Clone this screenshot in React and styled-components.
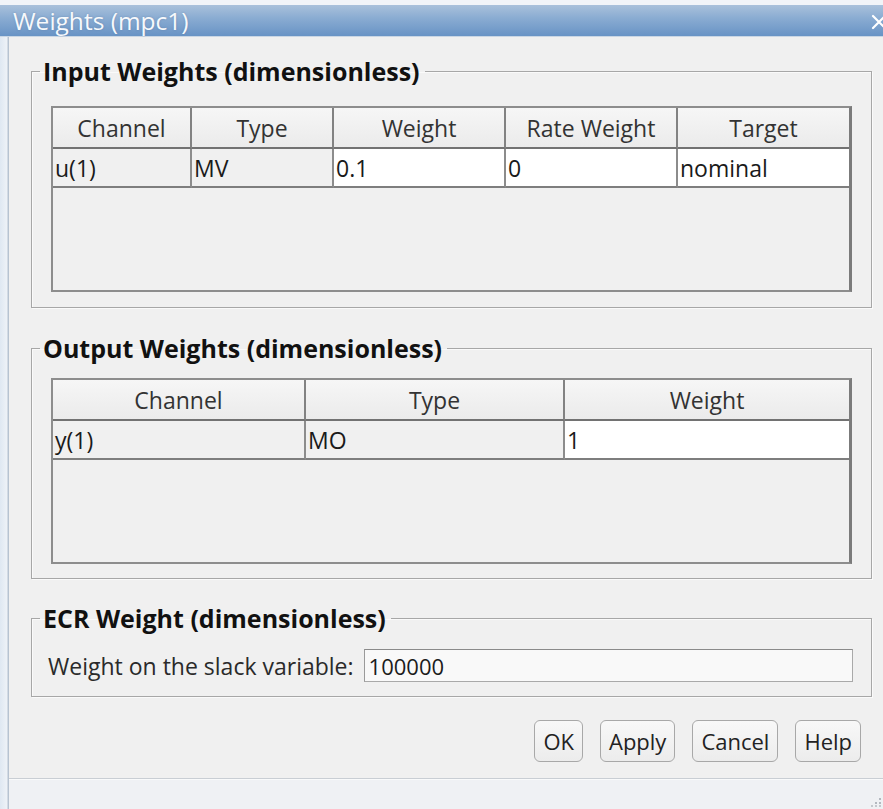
import React from "react";
import styled, { createGlobalStyle } from "styled-components";

const GlobalStyle = createGlobalStyle`
  html, body {
    margin: 0;
    padding: 0;
    background: #f0f0f0;
  }
  body {
    font-family: "Open Sans", "Noto Sans", "Liberation Sans", sans-serif;
    color: #1e1e1e;
  }
  * { box-sizing: border-box; }
`;

const Window = styled.div`
  width: 883px;
  height: 809px;
  display: flex;
  flex-direction: column;
  background: #f0f0f0;
  overflow: hidden;
`;

const TitleBar = styled.div`
  flex: none;
  height: 37px;
  padding: 5px 0 0 13px;
  display: flex;
  align-items: center;
  justify-content: space-between;
  overflow: hidden;
  background: linear-gradient(
    to bottom,
    #f1f4f8 0,
    #f1f4f8 5px,
    #a9c1db 5px,
    #8aacd2 18px,
    #6893c5 36px,
    #c9d6e4 36px
  );
`;

const Title = styled.span`
  font-size: 24.5px;
  line-height: 30px;
  color: #f7f9fc;
  text-shadow: 0 0 2px rgba(60, 90, 130, 0.35);
`;

const CloseGlyph = styled.svg`
  flex: none;
  margin-right: -4px;
  margin-top: 2px;
`;

const Frame = styled.div`
  flex: 1;
  display: flex;
  min-height: 0;
`;

const SideEdge = styled.div`
  flex: none;
  width: 9px;
  background: linear-gradient(to right, #dfe8f2, #eef2f7 7px, #b7c3d1 8px, #b7c3d1 9px);
`;

const Main = styled.div`
  flex: 1;
  display: flex;
  flex-direction: column;
  min-width: 0;
`;

const Body = styled.div`
  flex: 1;
  display: flex;
  flex-direction: column;
  padding: 21px 11px 0 22px;
`;

const GroupBox = styled.fieldset`
  margin: ${(p) => p.$top}px 0 0 0;
  padding: 0;
  min-width: 0;
  border: 1px solid #a7a7a7;
  box-shadow: inset 1px 1px 0 #fafafa, 1px 1px 0 #fafafa;
`;

const Legend = styled.legend`
  margin-left: 8px;
  padding: 0 5px 0 3px;
  font-size: 25px;
  line-height: 26px;
  font-weight: 700;
  color: #111;
`;

const GroupBody = styled.div`
  padding: ${(p) => p.$pt}px 19px ${(p) => p.$pb}px 19px;
`;

const Grid = styled.div`
  display: grid;
  grid-template-columns: ${(p) => p.$cols};
  grid-template-rows: 41px 39px 1fr;
  height: 186px;
  border: 2px solid #8d8d8d;
  border-right: 3px solid #7b7b7b;
  background: #f0f0f0;
`;

const HeadCell = styled.div`
  display: flex;
  align-items: center;
  justify-content: center;
  font-size: 23px;
  color: #333;
  background: linear-gradient(to bottom, #f6f6f6, #ebebeb);
  border-bottom: 2px solid #727272;
  border-right: ${(p) => (p.$last ? "none" : "2px solid #828282")};
  white-space: nowrap;
  overflow: hidden;
`;

const DataCell = styled.div`
  display: flex;
  align-items: center;
  padding-left: 2px;
  font-size: 23px;
  color: #1a1a1a;
  background: ${(p) => (p.$editable ? "#ffffff" : "#f0f0f0")};
  border-bottom: 2px solid #7e7e7e;
  border-right: ${(p) => (p.$last ? "none" : "2px solid #8c8c8c")};
  white-space: nowrap;
  overflow: hidden;
`;

const FieldRow = styled.div`
  display: flex;
  align-items: center;
  gap: 10px;
  padding: 18px 18px 14px 16px;
`;

const FieldLabel = styled.span`
  font-size: 23px;
  color: #2a2a2a;
  white-space: nowrap;
`;

const TextField = styled.div`
  flex: 1;
  height: 33px;
  display: flex;
  align-items: center;
  padding-left: 4px;
  font-size: 22px;
  color: #1c1c1c;
  background: #f9f9f9;
  border: 1px solid #a9a9a9;
  border-top-color: #8a8a8a;
  border-left-color: #9a9a9a;
`;

const ButtonRow = styled.div`
  display: flex;
  justify-content: flex-end;
  gap: 17px;
  margin-top: 23px;
  padding-right: 11px;
`;

const Button = styled.button`
  height: 42px;
  padding: 0 8px;
  font-family: inherit;
  font-size: 22px;
  color: #222;
  background: linear-gradient(to bottom, #f8f8f8, #ececec);
  border: 1px solid #a8a8a8;
  border-radius: 6px;
  cursor: default;
`;

const StatusBar = styled.div`
  flex: none;
  height: 31px;
  display: flex;
  justify-content: flex-end;
  align-items: flex-end;
  padding: 0 1px 2px 0;
  background: #eff1f4;
  border-top: 1px solid #c9ced4;
  box-shadow: inset 0 1px 0 #f9fafb;
`;

const inputColumns = [
  { key: "Channel", value: "u(1)", editable: false },
  { key: "Type", value: "MV", editable: false },
  { key: "Weight", value: "0.1", editable: true },
  { key: "Rate Weight", value: "0", editable: true },
  { key: "Target", value: "nominal", editable: true },
];

const outputColumns = [
  { key: "Channel", value: "y(1)", editable: false },
  { key: "Type", value: "MO", editable: false },
  { key: "Weight", value: "1", editable: true },
];

function WeightTable({ columns, template }) {
  return (
    <Grid $cols={template}>
      {columns.map((c, i) => (
        <HeadCell key={`h-${c.key}`} $last={i === columns.length - 1}>
          {c.key}
        </HeadCell>
      ))}
      {columns.map((c, i) => (
        <DataCell
          key={`d-${c.key}`}
          $editable={c.editable}
          $last={i === columns.length - 1}
        >
          {c.value}
        </DataCell>
      ))}
    </Grid>
  );
}

function ResizeGrip() {
  return (
    <svg width="12" height="12" viewBox="0 0 12 12">
      <rect x="9" y="3" width="2" height="2" fill="#b3b8bf" />
      <rect x="5" y="7" width="2" height="2" fill="#b3b8bf" />
      <rect x="9" y="7" width="2" height="2" fill="#b3b8bf" />
      <rect x="1" y="10" width="2" height="2" fill="#c4c8cd" />
      <rect x="5" y="10" width="2" height="2" fill="#c4c8cd" />
      <rect x="9" y="10" width="2" height="2" fill="#c4c8cd" />
    </svg>
  );
}

export default function App() {
  return (
    <>
      <GlobalStyle />
      <Window>
        <TitleBar>
          <Title>Weights (mpc1)</Title>
          <CloseGlyph width="16" height="16" viewBox="0 0 16 16">
            <path
              d="M2 2 L14 14 M14 2 L2 14"
              stroke="#ffffff"
              strokeWidth="2.2"
              strokeLinecap="round"
            />
          </CloseGlyph>
        </TitleBar>
        <Frame>
          <SideEdge />
          <Main>
            <Body>
              <GroupBox $top={0}>
                <Legend>Input Weights (dimensionless)</Legend>
                <GroupBody $pt={22} $pb={15}>
                  <WeightTable
                    columns={inputColumns}
                    template="139px 142px 172px 172px 1fr"
                  />
                </GroupBody>
              </GroupBox>

              <GroupBox $top={27}>
                <Legend>Output Weights (dimensionless)</Legend>
                <GroupBody $pt={17} $pb={14}>
                  <WeightTable
                    columns={outputColumns}
                    template="253px 259px 1fr"
                  />
                </GroupBody>
              </GroupBox>

              <GroupBox $top={26}>
                <Legend>ECR Weight (dimensionless)</Legend>
                <FieldRow>
                  <FieldLabel>Weight on the slack variable:</FieldLabel>
                  <TextField>100000</TextField>
                </FieldRow>
              </GroupBox>

              <ButtonRow>
                <Button>OK</Button>
                <Button>Apply</Button>
                <Button>Cancel</Button>
                <Button>Help</Button>
              </ButtonRow>
            </Body>
            <StatusBar>
              <ResizeGrip />
            </StatusBar>
          </Main>
        </Frame>
      </Window>
    </>
  );
}
